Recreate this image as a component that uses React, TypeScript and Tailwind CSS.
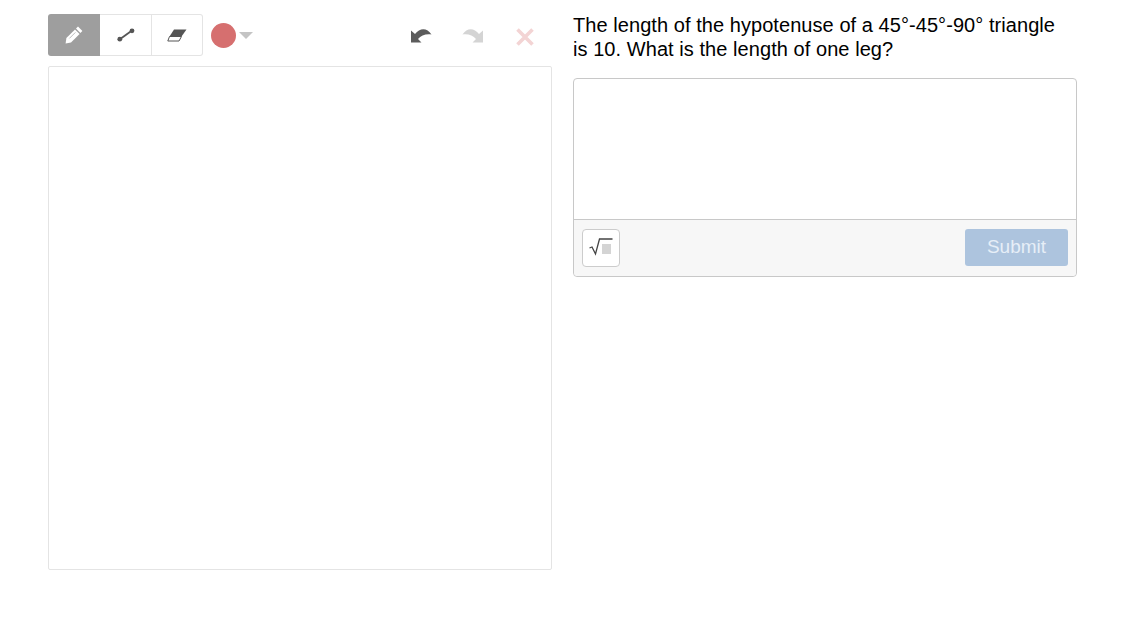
function Pencil() {
  return (
    <svg width="18" height="18" viewBox="0 0 18 18">
      <path d="M13 0.6 L17.4 5 L15.4 7 L11 2.6 Z" fill="#fff" />
      <path d="M10 3.4 L14.6 8 L6 16.6 L0.6 17.4 L1.4 12 Z" fill="#fff" />
      <path d="M10.4 6.4 L4.4 12.4" stroke="#bdbdbd" strokeWidth="1" />
    </svg>
  )
}

function LineTool() {
  return (
    <svg width="18" height="14" viewBox="0 0 18 14">
      <path d="M2.5 11.5 L15 2.5" stroke="#555" strokeWidth="1.8" />
      <circle cx="2.8" cy="11.2" r="2.4" fill="#555" />
      <circle cx="15" cy="2.8" r="2.4" fill="#555" />
    </svg>
  )
}

function Eraser() {
  return (
    <svg width="20" height="13" viewBox="0 0 20 13">
      <path d="M7 0.5 H19.5 L14.5 7.5 H2.5 Z" fill="#555" />
      <path d="M2.5 7.5 H14.5 L12 12 H0.8 Z" fill="#fff" stroke="#555" strokeWidth="1" />
    </svg>
  )
}

function Undo({ color }: { color: string }) {
  return (
    <svg width="22" height="16" viewBox="0 0 22 16">
      <path d="M1 3.5 V15.5 H11.5 L8 12 C11 8.5 16 6.5 21.5 7.5 C17 0.5 10 0.5 5 7 Z" fill={color} />
    </svg>
  )
}

function App() {
  return (
    <div className="flex w-[1128px] h-[622px] bg-white pl-[48px] pt-[14px] gap-[21px] font-['Liberation_Sans',sans-serif]">
      <div className="flex flex-col w-[504px]">
        <div className="flex items-center h-[42px]">
          <div className="flex h-[42px]">
            <div className="flex items-center justify-center w-[52px] bg-[#9e9e9e] rounded-l-[3px]">
              <Pencil />
            </div>
            <div className="flex items-center justify-center w-[52px] border-y border-r border-[#e4e4e4]">
              <LineTool />
            </div>
            <div className="flex items-center justify-center w-[51px] border-y border-r border-[#e4e4e4] rounded-r-[3px]">
              <Eraser />
            </div>
          </div>
          <div className="w-[25px] h-[25px] rounded-full bg-[#d66f6f] ml-2" />
          <div className="w-0 h-0 ml-[3px] border-x-[7px] border-x-transparent border-t-[7px] border-t-[#c4c4c4]" />
          <div className="flex items-center ml-auto mr-[16px] gap-[30px]">
            <Undo color="#5c5c5c" />
            <div className="-scale-x-100">
              <Undo color="#d4d4d4" />
            </div>
            <svg width="22" height="22" viewBox="0 0 22 22" className="mt-[3px]">
              <path d="M3.5 3.5 L18.5 18.5 M18.5 3.5 L3.5 18.5" stroke="#f3d4d4" strokeWidth="3.6" />
            </svg>
          </div>
        </div>
        <div className="w-[504px] h-[504px] mt-[10px] border border-[#e4e4e4] rounded-[2px]" />
      </div>

      <div className="flex flex-col w-[504px]">
        <p className="-mt-[1px] text-[20px] leading-[24px] tracking-[0.06px] text-black w-[490px]">
          The length of the hypotenuse of a 45°-45°-90° triangle is 10. What is the length of one leg?
        </p>
        <div className="mt-[17px] h-[199px] flex flex-col border border-[#c8c8c8] rounded-[4px]">
          <div className="h-[141px] border-b border-[#c8c8c8]" />
          <div className="flex flex-1 items-center justify-between px-[8px] bg-[#f7f7f7] rounded-b-[4px]">
            <div className="flex items-center justify-center w-[38px] h-[38px] bg-white border border-[#cccccc] rounded-[4px]">
              <svg width="24" height="18" viewBox="0 0 24 18" className="-mt-[2px]">
                <rect x="13" y="6" width="9" height="10" fill="#d4d4d4" />
                <path d="M0.5 10 L3 9 L6.5 16 L10.5 1 H23.5" fill="none" stroke="#444" strokeWidth="1.3" />
              </svg>
            </div>
            <div className="flex items-center justify-center w-[103px] h-[37px] mb-[2px] bg-[#adc4de] rounded-[3px] text-[19px] text-[#e6eef7]">
              Submit
            </div>
          </div>
        </div>
      </div>
    </div>
  )
}

export default App
